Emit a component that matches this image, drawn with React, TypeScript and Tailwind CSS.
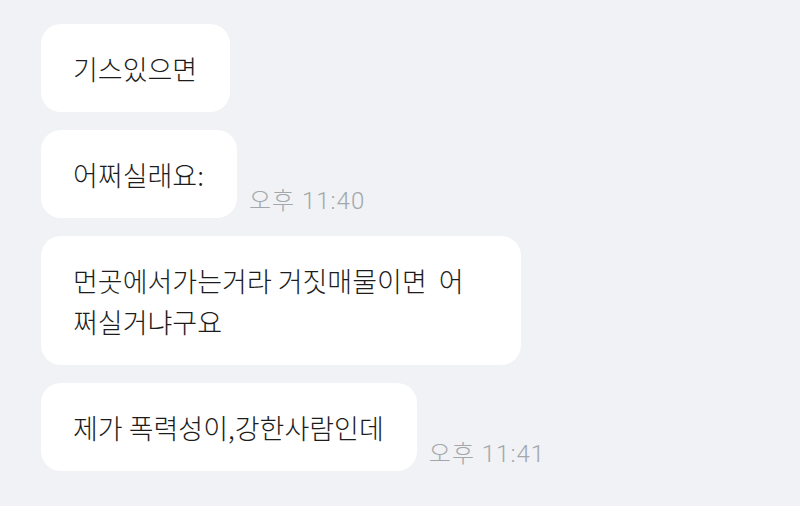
import React from "react";

const font = { fontFamily: '"Noto Sans CJK KR", "Noto Sans", sans-serif' };
const timeFont = { fontFamily: 'Roboto, "Noto Sans CJK KR", sans-serif' };

function Bubble({
  children,
  time,
  wide,
}: {
  children: React.ReactNode;
  time?: string;
  wide?: boolean;
}) {
  return (
    <div className="flex items-end">
      <div
        className={
          wide
            ? "w-[480px] bg-white rounded-[20px] pl-[32px] pr-[33px] py-[23.5px] text-[27px] leading-[41px] font-light text-[#1c1c1c] whitespace-pre"
            : "bg-white rounded-[20px] pl-[32px] pr-[33px] py-[23.5px] text-[27px] leading-[41px] font-light text-[#1c1c1c] whitespace-pre"
        }
      >
        {children}
      </div>
      {time && (
        <div
          style={timeFont}
          className="ml-[12px] mb-[3px] text-[24px] leading-[28px] tracking-[1px] font-light text-[#a3a7ab] whitespace-pre"
        >
          {time}
        </div>
      )}
    </div>
  );
}

export default function App() {
  return (
    <div style={font} className="w-[800px] h-[506px] bg-[#f0f2f5] overflow-hidden pl-[41px] pt-[24px] flex flex-col gap-[18px]">
      <Bubble>기스있으면</Bubble>
      <Bubble time="오후 11:40">어쩌실래요:</Bubble>
      <Bubble wide>
        {"먼곳에서가는거라 거짓매물이면  어"}
        <br />
        {"쩌실거냐구요"}
      </Bubble>
      <Bubble time="오후 11:41">제가 폭력성이,강한사람인데</Bubble>
    </div>
  );
}
